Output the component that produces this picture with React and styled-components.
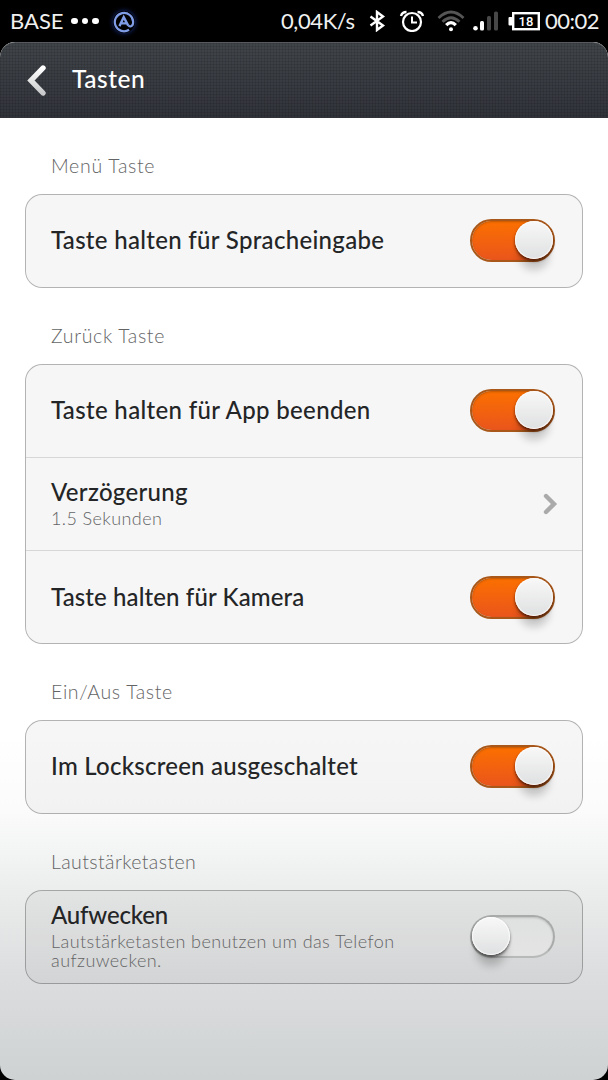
import React from 'react';
import styled, { createGlobalStyle, css } from 'styled-components';

const GlobalStyle = createGlobalStyle`
    html,
    body,
    #root {
        margin: 0;
        height: 100%;
        background: #000000;
    }

    * {
        box-sizing: border-box;
    }
`;

const Phone = styled.div`
    display: flex;
    flex-direction: column;
    width: 608px;
    height: 1080px;
    overflow: hidden;
    background: #000000;
    font-family: 'Lato', 'Open Sans', sans-serif;
`;

const StatusBar = styled.header`
    display: flex;
    align-items: center;
    flex: none;
    height: 42px;
    padding: 0 9px 0 10px;
    color: #f0f0f0;
    font-size: 22px;
    white-space: nowrap;
`;

const StatusText = styled.span`
    flex: none;
    width: ${props => props.$width}px;
    margin-left: ${props => props.$gap || 0}px;
    padding-bottom: 2px;
    letter-spacing: ${props => props.$spacing || 0}px;
`;

const Spacer = styled.span`
    flex: 1;
`;

const Dots = styled.span`
    display: flex;
    gap: 4px;
    margin-left: 8px;

    i {
        width: 6.5px;
        height: 6.5px;
        border-radius: 50%;
        background: #ffffff;
    }
`;

const StatusIcon = styled.svg`
    flex: none;
    margin-left: ${props => props.$gap || 0}px;
    fill: none;
    stroke: ${props => props.$color || '#ffffff'};
    stroke-width: 2;
`;

const AppIcon = styled(StatusIcon)`
    margin-top: 2px;
    border-radius: 50%;
    box-shadow: 0 0 5px rgba(40, 80, 220, 0.6);
`;

const BatteryLevel = styled.text`
    fill: #ffffff;
    stroke: none;
    font: 500 13px 'Roboto', sans-serif;
`;

const Screen = styled.main`
    flex: 1;
    overflow: hidden;
    border-radius: 15px;
    background: linear-gradient(
        #ffffff 0,
        #ffffff 690px,
        #fafbfa 768px,
        #f3f5f4 810px,
        #ebecec 850px,
        #dcddde 935px,
        #ced2d3 1038px
    );
`;

const TitleBar = styled.div`
    display: flex;
    align-items: center;
    height: 76px;
    padding: 0 0 2px 26px;
    border-radius: 15px 15px 0 0;
    border-top: 1px solid #565a5e;
    background:
        repeating-linear-gradient(90deg, rgba(0, 0, 0, 0.1) 0 1px, transparent 1px 3px),
        repeating-linear-gradient(rgba(0, 0, 0, 0.1) 0 1px, transparent 1px 3px),
        linear-gradient(#40454a, #31333a);
`;

const Title = styled.h1`
    margin: 0 0 2px 26px;
    color: #ffffff;
    font-size: 24.5px;
    font-weight: 500;
    letter-spacing: 0.5px;
`;

const SectionLabel = styled.h2`
    display: flex;
    align-items: center;
    height: 76px;
    margin: 0;
    padding: 19px 0 0 51px;
    color: #636465;
    font-size: 19.5px;
    font-weight: 300;
    letter-spacing: ${props => props.$spacing || 0}px;
`;

const Card = styled.div`
    margin: 0 25px;
    border: 1px solid #00000046;
    border-radius: 17px;
    background: rgba(0, 0, 0, 0.035);
`;

const Row = styled.div`
    display: flex;
    align-items: center;
    justify-content: space-between;
    height: 92px;
    padding: 0 27px 0 25px;

    &:first-child {
        padding-bottom: 2px;
    }

    & + & {
        height: 93px;
        border-top: 1px solid #d6d7d7;
    }
`;

const RowText = styled.div`
    padding-bottom: 1px;
`;

const RowTitle = styled.div`
    color: #242526;
    font-size: 24px;
    font-weight: 500;
    line-height: 26px;
    letter-spacing: ${props => props.$spacing || 0}px;
    white-space: nowrap;
`;

const RowNote = styled.div`
    margin-top: 4px;
    color: #636465;
    font-size: 18px;
    font-weight: 300;
    line-height: 19px;
    letter-spacing: ${props => props.$spacing || 0}px;
    white-space: pre-line;
`;

const Track = styled.div`
    display: flex;
    align-items: center;
    flex: none;
    width: 85px;
    height: 43px;
    border-radius: 22px;
    ${props =>
        props.$on
            ? css`
                  justify-content: flex-end;
                  border: 2px solid #a9581a;
                  background: linear-gradient(#fb7000, #e9551c) padding-box;
                  box-shadow: inset 0 1px 2px rgba(110, 50, 0, 0.4);
              `
            : css`
                  justify-content: flex-start;
                  border: 2px solid #a9aaaa;
                  border-bottom-color: #b8b9b9;
                  background: linear-gradient(#dfe0e0, #e4e4e5);
                  box-shadow: inset 0 1px 2px rgba(0, 0, 0, 0.15);
              `}
`;

const Knob = styled.div`
    width: 38px;
    height: 38px;
    border-radius: 50%;
    background: linear-gradient(#f8f8f8, #dfe0e1);
    box-shadow:
        inset 0 0 1px 1px rgba(255, 255, 255, 0.8),
        0 2px 3px ${props => (props.$on ? 'rgba(50, 15, 0, 0.8)' : 'rgba(0, 0, 0, 0.6)')},
        0 15px 8px -4px rgba(0, 0, 0, 0.2);
`;

const Toggle = ({ on }) => (
    <Track $on={on} role="switch" aria-checked={on}>
        <Knob $on={on} />
    </Track>
);

const ChevronSlot = styled.svg`
    margin-right: -3px;
`;

const BackIcon = () => (
    <svg width="20" height="32" viewBox="0 0 20 32">
        <defs>
            <linearGradient id="back" x1="0" y1="0" x2="0" y2="1">
                <stop offset="0" stopColor="#ffffff" />
                <stop offset="1" stopColor="#c9cacb" />
            </linearGradient>
        </defs>
        <path d="M17 4 L5 16.5 L17 29" fill="none" stroke="url(#back)" strokeWidth="5.4" strokeLinecap="round" />
    </svg>
);

const ChevronIcon = () => (
    <ChevronSlot width="15" height="22" viewBox="0 0 15 22">
        <path d="M3 3 L11 11 L3 19" fill="none" stroke="#aaaaaa" strokeWidth="4.4" strokeLinecap="round" />
    </ChevronSlot>
);

const App = () => (
    <Phone>
        <GlobalStyle />
        <StatusBar>
            <StatusText $width={53}>BASE</StatusText>
            <Dots>
                <i />
                <i />
                <i />
            </Dots>
            <AppIcon $gap={14} $color="#7f9ce6" width="22" height="22" viewBox="0 0 24 24">
                <path d="M17.5 20.5 A10 10 0 1 1 22 12 C22 17.5 17.8 17.5 16.8 15.5" strokeWidth="2.4" />
                <path d="M7 16.5 L11.7 6.8 L16.6 16 M9 13.5 H15" strokeWidth="2.6" />
            </AppIcon>
            <Spacer />
            <StatusText $width={75} $spacing={-0.4}>
                0,04K/s
            </StatusText>
            <StatusIcon $gap={13} width="17" height="22" viewBox="0 0 17 22">
                <path d="M1.5 6.5 L14 15.5 L8 20 V2 L14 6.5 L1.5 15.5" strokeWidth="2.4" />
            </StatusIcon>
            <StatusIcon $gap={13} width="26" height="22" viewBox="0 0 26 22">
                <circle cx="13" cy="12" r="9" strokeWidth="2.2" />
                <path d="M13 6.5 V12.5 H18" />
                <path d="M2 6 Q3 2 7.5 2 M24 6 Q23 2 18.5 2" strokeWidth="2.4" />
            </StatusIcon>
            <StatusIcon $gap={12} width="28" height="22" viewBox="0 0 28 22">
                <path d="M1.5 8 Q14 -4 26.5 8 M5.5 11.8 Q14 3.5 22.5 11.8" stroke="#555555" strokeWidth="2.8" />
                <path d="M9.2 15.2 Q14 10.2 18.8 15.2" strokeWidth="3.2" />
                <circle cx="14" cy="19.3" r="2" fill="#ffffff" stroke="none" />
            </StatusIcon>
            <StatusIcon $gap={8} $color="none" width="26" height="20" viewBox="0 0 26 20">
                <circle cx="2.5" cy="17.3" r="2.3" fill="#ffffff" />
                <rect x="7" y="10" width="4" height="9.5" rx="1.5" fill="#ffffff" />
                <rect x="14" y="5" width="4" height="14.5" rx="1.5" fill="#484848" />
                <rect x="21" y="0.5" width="4" height="19" rx="1.5" fill="#484848" />
            </StatusIcon>
            <StatusIcon $gap={9} width="32" height="20" viewBox="0 0 32 20">
                <rect x="5.2" y="2.2" width="25.6" height="16" strokeWidth="2.4" />
                <rect x="0.5" y="6" width="4" height="8.5" rx="1" fill="#ffffff" stroke="none" />
                <BatteryLevel x="10.5" y="14.8">
                    18
                </BatteryLevel>
            </StatusIcon>
            <StatusText $width={54} $gap={5} $spacing={-0.5}>
                00:02
            </StatusText>
        </StatusBar>
        <Screen>
            <TitleBar>
                <BackIcon />
                <Title>Tasten</Title>
            </TitleBar>

            <SectionLabel $spacing={0.7}>Menü Taste</SectionLabel>
            <Card>
                <Row>
                    <RowTitle $spacing={0.31}>Taste halten für Spracheingabe</RowTitle>
                    <Toggle on />
                </Row>
            </Card>

            <SectionLabel $spacing={0.65}>Zurück Taste</SectionLabel>
            <Card>
                <Row>
                    <RowTitle $spacing={0.34}>Taste halten für App beenden</RowTitle>
                    <Toggle on />
                </Row>
                <Row>
                    <RowText>
                        <RowTitle $spacing={0.3}>Verzögerung</RowTitle>
                        <RowNote $spacing={0.4}>1.5 Sekunden</RowNote>
                    </RowText>
                    <ChevronIcon />
                </Row>
                <Row>
                    <RowTitle $spacing={0.12}>Taste halten für Kamera</RowTitle>
                    <Toggle on />
                </Row>
            </Card>

            <SectionLabel $spacing={0.65}>Ein/Aus Taste</SectionLabel>
            <Card>
                <Row>
                    <RowTitle $spacing={0.24}>Im Lockscreen ausgeschaltet</RowTitle>
                    <Toggle on />
                </Row>
            </Card>

            <SectionLabel $spacing={0.4}>Lautstärketasten</SectionLabel>
            <Card>
                <Row>
                    <RowText>
                        <RowTitle $spacing={-0.2}>Aufwecken</RowTitle>
                        <RowNote $spacing={0.42}>{'Lautstärketasten benutzen um das Telefon\naufzuwecken.'}</RowNote>
                    </RowText>
                    <Toggle on={false} />
                </Row>
            </Card>
        </Screen>
    </Phone>
);

export default App;
